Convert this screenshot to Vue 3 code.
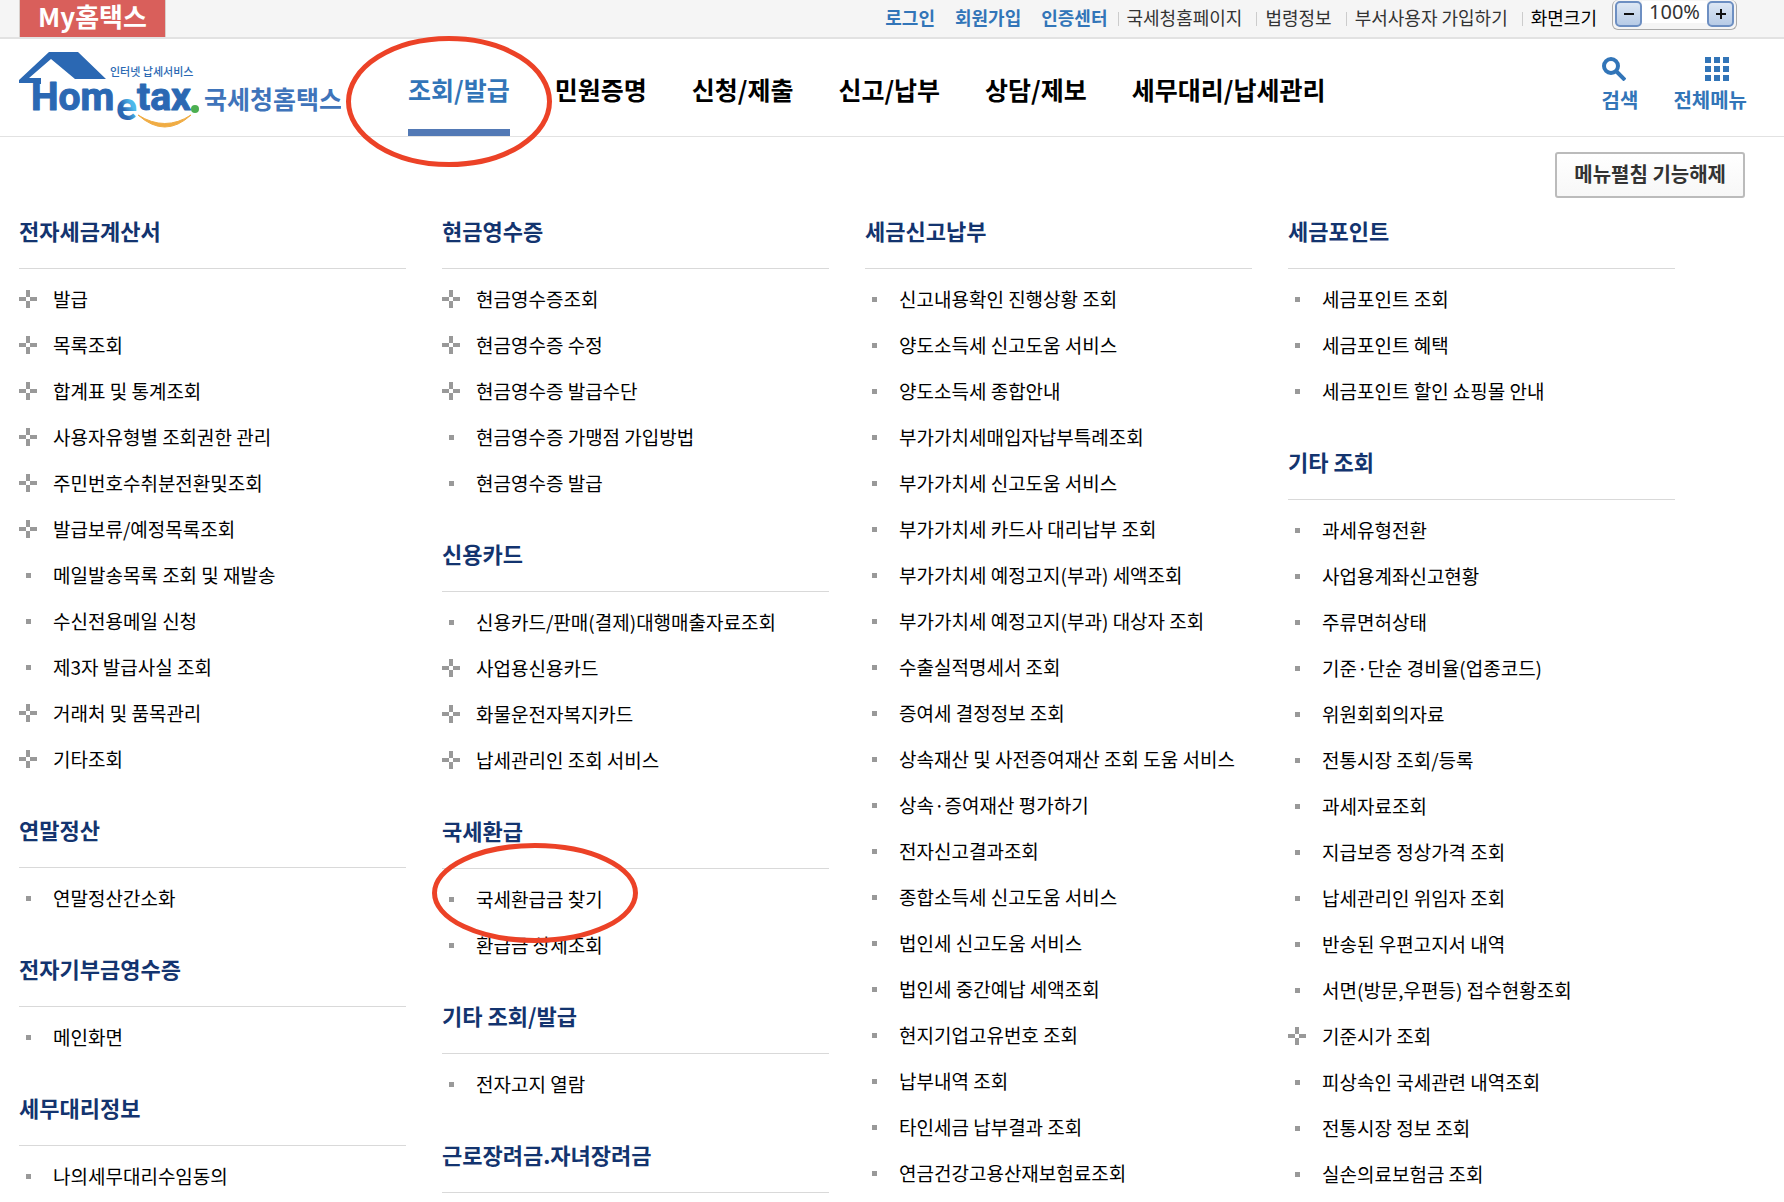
<script setup>
const topLinks = [
  { text: '로그인', kind: 'member' },
  { text: '회원가입', kind: 'member' },
  { text: '인증센터', kind: 'member' },
  { text: '국세청홈페이지', kind: 'site' },
  { text: '법령정보', kind: 'site' },
  { text: '부서사용자 가입하기', kind: 'site' },
]

const mainMenu = ['조회/발급', '민원증명', '신청/제출', '신고/납부', '상담/제보', '세무대리/납세관리']

// A leading "+" marks an entry that opens a further level.
const columns = [
  [
    {
      title: '전자세금계산서',
      items: ['+발급', '+목록조회', '+합계표 및 통계조회', '+사용자유형별 조회권한 관리', '+주민번호수취분전환및조회', '+발급보류/예정목록조회', '메일발송목록 조회 및 재발송', '수신전용메일 신청', '제3자 발급사실 조회', '+거래처 및 품목관리', '+기타조회'],
    },
    { title: '연말정산', items: ['연말정산간소화'] },
    { title: '전자기부금영수증', items: ['메인화면'] },
    { title: '세무대리정보', items: ['나의세무대리수임동의'] },
  ],
  [
    {
      title: '현금영수증',
      items: ['+현금영수증조회', '+현금영수증 수정', '+현금영수증 발급수단', '현금영수증 가맹점 가입방법', '현금영수증 발급'],
    },
    {
      title: '신용카드',
      items: ['신용카드/판매(결제)대행매출자료조회', '+사업용신용카드', '+화물운전자복지카드', '+납세관리인 조회 서비스'],
    },
    { title: '국세환급', items: ['국세환급금 찾기', '환급금 상세조회'], circled: '국세환급금 찾기' },
    { title: '기타 조회/발급', items: ['전자고지 열람'] },
    { title: '근로장려금.자녀장려금', items: [] },
  ],
  [
    {
      title: '세금신고납부',
      items: ['신고내용확인 진행상황 조회', '양도소득세 신고도움 서비스', '양도소득세 종합안내', '부가가치세매입자납부특례조회', '부가가치세 신고도움 서비스', '부가가치세 카드사 대리납부 조회', '부가가치세 예정고지(부과) 세액조회', '부가가치세 예정고지(부과) 대상자 조회', '수출실적명세서 조회', '증여세 결정정보 조회', '상속재산 및 사전증여재산 조회 도움 서비스', '상속·증여재산 평가하기', '전자신고결과조회', '종합소득세 신고도움 서비스', '법인세 신고도움 서비스', '법인세 중간예납 세액조회', '현지기업고유번호 조회', '납부내역 조회', '타인세금 납부결과 조회', '연금건강고용산재보험료조회'],
    },
  ],
  [
    { title: '세금포인트', items: ['세금포인트 조회', '세금포인트 혜택', '세금포인트 할인 쇼핑몰 안내'] },
    {
      title: '기타 조회',
      items: ['과세유형전환', '사업용계좌신고현황', '주류면허상태', '기준·단순 경비율(업종코드)', '위원회회의자료', '전통시장 조회/등록', '과세자료조회', '지급보증 정상가격 조회', '납세관리인 위임자 조회', '반송된 우편고지서 내역', '서면(방문,우편등) 접수현황조회', '+기준시가 조회', '피상속인 국세관련 내역조회', '전통시장 정보 조회', '실손의료보험금 조회'],
    },
  ],
]

const opens = (item) => item.startsWith('+')
const label = (item) => item.replace(/^\+/, '')
</script>

<template>
  <div class="page">
    <div class="topbar">
      <a class="my" href="#">My홈택스</a>
      <div class="util">
        <a v-for="l in topLinks" :key="l.text" :class="l.kind" href="#">{{ l.text }}</a>
        <span class="size-label">화면크기</span>
        <div class="zoom">
          <button type="button" aria-label="축소"><svg viewBox="0 0 10 10"><path d="M0 5H10" /></svg></button>
          <span>100%</span>
          <button type="button" aria-label="확대"><svg viewBox="0 0 10 10"><path d="M0 5H10M5 0V10" /></svg></button>
        </div>
      </div>
    </div>

    <header class="header">
      <a class="logo" href="#" aria-label="국세청홈택스">
        <svg viewBox="0 0 322 78" width="322" height="78">
          <defs>
            <linearGradient id="e-fill" x1="0" y1="1" x2="1" y2="0">
              <stop offset="0.4" stop-color="#2b68b3" />
              <stop offset="0.65" stop-color="#4db8ea" />
            </linearGradient>
          </defs>
          <path d="M30 0H59L87 27H56L32 7L10 26H22V32H15V31H0V28Z" fill="#2b68b3" />
          <g class="word">
            <text x="12" y="58">Hom</text>
            <text x="97" y="68" fill="url(#e-fill)">e</text>
            <text x="118" y="58">tax</text>
          </g>
          <circle cx="176" cy="57" r="4" fill="#4caf50" />
          <path d="M119 63Q146 87 172 63Q146 80 119 63Z" fill="#f0ac43" stroke="#f0ac43" />
          <text class="tag" x="91" y="24">인터넷 납세서비스</text>
          <text class="name" x="185" y="57">국세청홈택스</text>
        </svg>
      </a>
      <nav class="menu">
        <a v-for="(m, i) in mainMenu" :key="m" href="#" :class="{ active: i === 0 }">
          {{ m }}
          <svg v-if="i === 0" class="ring ring-menu" viewBox="0 0 206 131"><ellipse cx="103" cy="65.5" rx="100.5" ry="63" /></svg>
        </a>
      </nav>
      <div class="tools">
        <a href="#">
          <svg class="search" viewBox="0 0 24 24"><circle cx="9" cy="9" r="7" /><path d="M14 14L23 23" /></svg>
          검색
        </a>
        <a href="#">
          <svg class="dots" viewBox="0 0 24 24"><path d="M0 0h6v6H0zM9 0h6v6H9zM18 0h6v6h-6zM0 9h6v6H0zM9 9h6v6H9zM18 9h6v6h-6zM0 18h6v6H0zM9 18h6v6H9zM18 18h6v6h-6z" /></svg>
          전체메뉴
        </a>
      </div>
    </header>

    <main>
      <div class="actions"><button type="button" class="unfold">메뉴펼침 기능해제</button></div>
      <div class="sitemap">
        <div v-for="(col, c) in columns" :key="c" class="col">
          <section v-for="s in col" :key="s.title">
            <h2>{{ s.title }}</h2>
            <ul>
              <li v-for="item in s.items" :key="item">
                <span class="mark" :class="opens(item) ? 'plus' : 'dot'"></span>
                <a href="#">{{ label(item) }}</a>
                <svg v-if="s.circled === item" class="ring ring-item" viewBox="0 0 206 100"><ellipse cx="103" cy="50" rx="100.5" ry="47.5" /></svg>
              </li>
            </ul>
          </section>
        </div>
      </div>
    </main>
  </div>
</template>

<style>
body {
  margin: 0;
  background: #fff;
}
</style>

<style scoped>
.page {
  font-family: "Noto Sans CJK KR", "Noto Sans", sans-serif;
  color: #000;
  white-space: nowrap;
}
a {
  color: inherit;
  text-decoration: none;
}
button {
  font-family: inherit;
  cursor: pointer;
}

.topbar {
  display: flex;
  justify-content: space-between;
  height: 37px;
  padding: 0 47px 0 19px;
  background: #f5f5f5;
  border-bottom: 2px solid #e2e2e2;
}
.my {
  width: 145px;
  border: solid #d8d0cc;
  border-width: 0 1px;
  background: #d95f5b;
  color: #fff;
  font-size: 26px;
  font-weight: 700;
  line-height: 32px;
  text-align: center;
}
.util {
  display: flex;
  font-size: 18px;
  line-height: 34px;
}
.member {
  margin-right: 20px;
  color: #3275b8;
  font-weight: 700;
}
.site {
  color: #333;
}
.member + .site {
  margin-left: -10px;
}
.site::before,
.size-label::before {
  content: "";
  display: inline-block;
  width: 1px;
  height: 14px;
  margin-right: 8px;
  background: #ccc;
  vertical-align: -1px;
}
.site::after {
  content: "";
  display: inline-block;
  width: 14px;
}
.zoom {
  display: flex;
  align-items: flex-start;
  box-sizing: border-box;
  height: 30px;
  margin-left: 15px;
  padding: 1px 2px 2px;
  border: 1px solid #aaa;
  border-top: 0;
  border-radius: 6px;
  background: #f5f5f5;
}
.zoom span {
  width: 65px;
  background: #fff;
  color: #333;
  font-family: "Noto Sans", sans-serif;
  font-size: 20px;
  line-height: 22px;
  text-align: center;
}
.zoom button {
  display: grid;
  place-items: center;
  width: 27px;
  height: 26px;
  padding: 0;
  border: 2px solid #6d8fc2;
  border-radius: 5px;
  background: linear-gradient(#dde7f4, #b7cbe6);
}
.zoom svg {
  width: 10px;
  height: 10px;
  fill: none;
  stroke: #111;
  stroke-width: 2;
}

.header {
  display: flex;
  height: 97px;
  padding-left: 19px;
  border-bottom: 1px solid #e2e2e2;
}
.logo {
  margin: 13px 67px 0 0;
}
.word {
  fill: #2b68b3;
  stroke: #2b68b3;
  stroke-linejoin: round;
  font-family: Roboto, "Liberation Sans", sans-serif;
  font-size: 39px;
  font-weight: 700;
}
.word [fill] {
  stroke: none;
}
.tag {
  fill: #2b68b3;
  font-size: 11px;
  font-weight: 500;
}
.name {
  fill: #3f74ba;
  font-size: 25px;
  font-weight: 700;
}
.menu {
  display: flex;
  gap: 45px;
  font-size: 25px;
  font-weight: 700;
  line-height: 100px;
}
.menu a {
  position: relative;
}
.active {
  box-sizing: border-box;
  height: 97px;
  border-bottom: 7px solid #5279b5;
  color: #3275b8;
}
.ring {
  position: absolute;
  z-index: 1;
  fill: none;
  stroke: #ec4227;
  stroke-width: 5;
  pointer-events: none;
}
.ring-menu {
  top: -3px;
  left: -62px;
  width: 206px;
  height: 131px;
}
.ring-item {
  top: -33px;
  left: -10px;
  width: 206px;
  height: 100px;
}
.tools {
  display: flex;
  gap: 35px;
  margin-left: auto;
  padding: 18px 37px 0 0;
  color: #3275b8;
  font-size: 20px;
  font-weight: 700;
  line-height: 30px;
}
.tools a {
  display: flex;
  flex-direction: column;
  gap: 4px;
}
.tools svg {
  width: 24px;
  height: 24px;
}
.search {
  fill: none;
  stroke: #3275b8;
  stroke-width: 4;
}
.dots {
  margin-left: 32px;
  fill: #3275b8;
}

.actions {
  display: flex;
  justify-content: flex-end;
  padding: 15px 39px 0 0;
}
.unfold {
  box-sizing: border-box;
  height: 46px;
  padding: 0 17px 4px;
  border: 2px solid #bbb;
  border-radius: 3px;
  background: linear-gradient(#fff, #f7f7f7);
  color: #333;
  font-size: 20px;
  font-weight: 700;
}

.sitemap {
  display: grid;
  grid-template-columns: repeat(4, 1fr);
  gap: 36px;
  padding: 18px 109px 0 19px;
}
.col {
  display: flex;
  flex-direction: column;
  gap: 33px;
}
h2 {
  margin: 0;
  padding-bottom: 24px;
  border-bottom: 1px solid #d9d9d9;
  color: #13346f;
  font-size: 22px;
  font-weight: 700;
  line-height: 28px;
}
ul {
  margin: 0;
  padding: 7px 0 0;
  list-style: none;
}
li {
  position: relative;
  display: flex;
  align-items: center;
  gap: 16px;
  height: 46px;
  font-size: 19px;
}
li a {
  padding-bottom: 2px;
}
.mark {
  display: grid;
  place-items: center;
  width: 18px;
  height: 18px;
}
.dot::before {
  content: "";
  width: 5px;
  height: 5px;
  background: #999;
}
.plus {
  background:
    linear-gradient(#fff, #fff) center / 4px 4px no-repeat,
    linear-gradient(#999, #999) center / 18px 4px no-repeat,
    linear-gradient(#999, #999) center / 4px 18px no-repeat;
}
</style>
